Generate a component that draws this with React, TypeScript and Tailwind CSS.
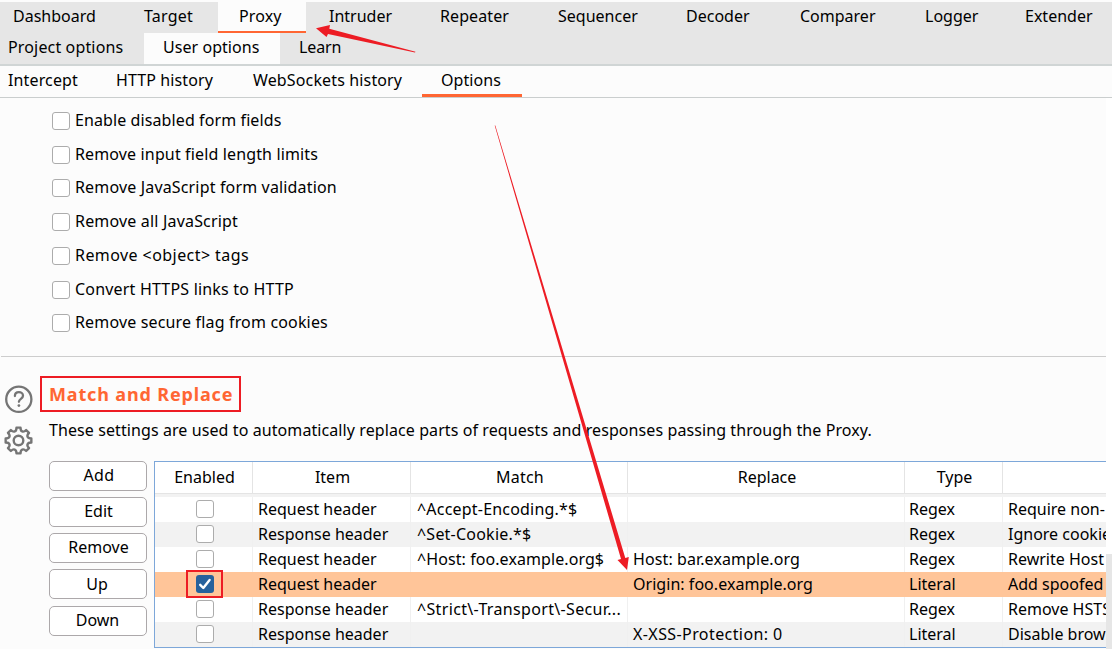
type Tab = { label: string; className: string; active?: boolean };

const topTabs: Tab[] = [
  { label: 'Dashboard', className: 'w-[118px] pl-[12px]' },
  { label: 'Target', className: 'w-[99px] pl-[25px] tracking-[0.2px]' },
  { label: 'Proxy', className: 'w-[88px] pl-[21px] tracking-[0.1px]', active: true },
  { label: 'Intruder', className: 'w-[111px] pl-[23px]' },
  { label: 'Repeater', className: 'w-[117px] pl-[23px] tracking-[0.1px]' },
  { label: 'Sequencer', className: 'w-[129px] pl-[24px]' },
  { label: 'Decoder', className: 'w-[113px] pl-[23px]' },
  { label: 'Comparer', className: 'w-[126px] pl-[24px]' },
  { label: 'Logger', className: 'w-[101px] pl-[23px]' },
  { label: 'Extender', className: 'w-[109px] pl-[22px]' },
];

const secondTabs: Tab[] = [
  { label: 'Project options', className: 'w-[144px] pl-[8px] tracking-[0.15px]' },
  { label: 'User options', className: 'w-[136px] pl-[19px] tracking-[0.05px]', active: true },
  { label: 'Learn', className: 'w-[80px] pl-[19px] tracking-[-0.1px]' },
];

const subTabs: Tab[] = [
  { label: 'Intercept', className: 'w-[92px] pl-[8px] tracking-[0.14px]' },
  { label: 'HTTP history', className: 'w-[140px] pl-[24px] tracking-[0.11px]' },
  { label: 'WebSockets history', className: 'w-[190px] pl-[21px] tracking-[0.14px]' },
  { label: 'Options', className: 'w-[100px] pl-[19px] tracking-[0.08px]', active: true },
];

const settings: Tab[] = [
  { label: 'Enable disabled form fields', className: 'tracking-[0.1px]' },
  { label: 'Remove input field length limits', className: 'tracking-[0.14px]' },
  { label: 'Remove JavaScript form validation', className: 'tracking-[0.16px]' },
  { label: 'Remove all JavaScript', className: 'tracking-[0.18px]' },
  { label: 'Remove <object> tags', className: 'tracking-[0.43px]' },
  { label: 'Convert HTTPS links to HTTP', className: 'tracking-[0.19px]' },
  { label: 'Remove secure flag from cookies', className: 'tracking-[0.16px]' },
];

const buttons: Tab[] = [
  { label: 'Add', className: 'pl-[2px] tracking-[0.4px]' },
  { label: 'Edit', className: 'pl-px' },
  { label: 'Remove', className: 'pl-px' },
  { label: 'Up', className: 'pr-[2px] pt-px' },
  { label: 'Down', className: 'mt-px pr-px' },
];

type Rule = {
  enabled?: boolean;
  item: string;
  match: string;
  matchClass?: string;
  replace: string;
  replaceClass?: string;
  type: string;
  comment: string;
  background: string;
};

const rules: Rule[] = [
  { item: 'Request header', match: '^Accept-Encoding.*$', matchClass: 'tracking-[0.2px]', replace: '', type: 'Regex', comment: 'Require non-', background: 'bg-white' },
  { item: 'Response header', match: '^Set-Cookie.*$', matchClass: 'tracking-[0.22px]', replace: '', type: 'Regex', comment: 'Ignore cookie', background: 'bg-[#f2f2f2]' },
  { item: 'Request header', match: '^Host: foo.example.org$', matchClass: 'tracking-[0.08px]', replace: 'Host: bar.example.org', replaceClass: 'tracking-[0.1px]', type: 'Regex', comment: 'Rewrite Host', background: 'bg-white' },
  { enabled: true, item: 'Request header', match: '', replace: 'Origin: foo.example.org', replaceClass: 'tracking-[0.04px]', type: 'Literal', comment: 'Add spoofed', background: 'bg-[#ffc599]' },
  { item: 'Response header', match: '^Strict\\-Transport\\-Secur...', matchClass: 'tracking-[0.34px]', replace: '', type: 'Regex', comment: 'Remove HSTS', background: 'bg-white' },
  { item: 'Response header', match: '', replace: 'X-XSS-Protection: 0', replaceClass: 'tracking-[0.41px]', type: 'Literal', comment: 'Disable brow', background: 'bg-[#f2f2f2]' },
];

function Checkbox({ checked }: { checked?: boolean }) {
  if (checked) {
    return (
      <span className="block size-[18px] shrink-0 rounded-[3px] bg-[#26619c]">
        <svg viewBox="0 0 18 18" className="size-[18px]" fill="none" stroke="white" strokeWidth="2.4" strokeLinecap="round" strokeLinejoin="round">
          <path d="M4.2 9.8 7.3 13 13.6 5" />
        </svg>
      </span>
    );
  }
  return <span className="block size-[18px] shrink-0 rounded-[3px] border border-[#acacac] bg-white" />;
}

function HelpIcon() {
  return (
    <svg viewBox="0 0 30 30" className="size-[30px]" fill="none" stroke="#757575" strokeWidth="2.3">
      <circle cx="14.8" cy="15.3" r="12.6" />
      <path d="M10.9 12c0-2.4 1.8-3.8 4-3.8s4.1 1.4 4.1 3.5c0 3.1-4.1 3.2-4.1 6.1" strokeLinecap="round" />
      <circle cx="14.9" cy="21.6" r="1.4" fill="#757575" stroke="none" />
    </svg>
  );
}

const polar = (radius: number, degrees: number) => {
  const a = (degrees * Math.PI) / 180;
  return `${(15.5 + radius * Math.cos(a)).toFixed(2)} ${(15.5 + radius * Math.sin(a)).toFixed(2)}`;
};

const gearPath =
  `M${polar(13, -9)}` +
  Array.from({ length: 8 }, (_, k) => {
    const a = k * 45;
    return `L${polar(13, a + 9)}C${polar(9, a + 13)} ${polar(9, a + 32)} ${polar(13, a + 36)}`;
  }).join('') +
  'Z';

function GearIcon() {
  return (
    <svg viewBox="0 0 31 31" className="size-[31px]" fill="none" stroke="#757575" strokeWidth="2.4" strokeLinejoin="round">
      <circle cx="15.5" cy="15.5" r="4.8" />
      <path d={gearPath} />
    </svg>
  );
}

const columns = 'grid grid-cols-[98px_158px_217px_277px_98px_103px]';

export default function App() {
  return (
    <div className="relative flex h-[649px] w-[1112px] flex-col overflow-hidden bg-[#fcfcfc] pt-[2px] font-['Noto_Sans',sans-serif] text-[16px] leading-6 whitespace-nowrap text-black">
      <header className="h-16 shrink-0 border-b-2 border-[#d0d5d5] bg-[#e6e6e6]">
        <nav className="flex h-[31px] pl-px">
          {topTabs.map((t) => (
            <div key={t.label} className={`shrink-0 pt-[2px] ${t.className} ${t.active ? 'border-b-2 border-[#ff6633] bg-[#fcfcfc]' : ''}`}>
              {t.label}
            </div>
          ))}
        </nav>
        <nav className="flex h-[31px]">
          {secondTabs.map((t) => (
            <div key={t.label} className={`shrink-0 pt-[2px] ${t.className} ${t.active ? 'bg-[#fcfcfc]' : ''}`}>
              {t.label}
            </div>
          ))}
        </nav>
      </header>
      <nav className="flex h-8 shrink-0 border-b border-[#cacece]">
        {subTabs.map((t) => (
          <div key={t.label} className={`h-[31px] shrink-0 pt-[2px] ${t.className} ${t.active ? 'border-b-3 border-[#ff6633]' : ''}`}>
            {t.label}
          </div>
        ))}
      </nav>

      <div className="flex min-h-0 flex-1">
        <main className="flex w-[1106px] flex-col">
          <section className="flex h-[258px] shrink-0 flex-col pt-[6px] pl-[52px]">
            {settings.map((s) => (
              <label key={s.label} className="flex h-[33.75px] shrink-0 items-center gap-[5px]">
                <Checkbox />
                <span className={`-mt-[2px] ${s.className}`}>{s.label}</span>
              </label>
            ))}
          </section>
          <div className="ml-px h-px shrink-0 bg-[#cdcdcd]" />
          <section className="flex pt-[19px]">
            <div className="flex w-[40px] shrink-0 flex-col items-start gap-[11px] pt-[8px] pl-[3px]">
              <span className="ml-px"><HelpIcon /></span>
              <GearIcon />
            </div>
            <div className="flex min-w-0 flex-1 flex-col">
              <h2 className="flex h-[36px] w-[201px] items-center border-2 border-[#ed1c24] pl-[7px] text-[18px] font-bold tracking-[0.85px] text-[#ff6633]">
                Match and Replace
              </h2>
              <p className="mt-[6px] pl-[9px] tracking-[0.09px]">
                These settings are used to automatically replace parts of requests and responses passing through the Proxy.
              </p>
              <div className="mt-[19px] flex gap-[7px] pl-[9px]">
                <div className="flex w-[98px] shrink-0 flex-col gap-[6px]">
                  {buttons.map((b) => (
                    <button key={b.label} className={`flex h-[30px] items-center justify-center rounded-[5px] border border-[#aca8aa] bg-white pb-[2px] ${b.className}`}>
                      {b.label}
                    </button>
                  ))}
                </div>
                <div className="h-[187px] w-[952px] overflow-hidden border border-r-0 border-[#7da7d9] bg-[#f2f2f2]">
                  <div className={`${columns} h-[32px] border-b border-[#e4e4e4] bg-white text-center *:border-[#e4e4e4] *:pt-[3px] *:pl-[2px] *:not-last:border-r`}>
                    <div>Enabled</div>
                    <div>Item</div>
                    <div className="tracking-[0.2px]">Match</div>
                    <div>Replace</div>
                    <div>Type</div>
                    <div />
                  </div>
                  <div className="mt-[3px]">
                    {rules.map((r, i) => (
                      <div key={i} className={`${columns} h-[25px] ${r.background} ${r.enabled ? '' : '*:border-[#f0f0f0] *:not-last:border-r'}`}>
                        <div className="flex items-center justify-center pb-px pl-[2px]">
                          {r.enabled ? (
                            <span className="relative">
                              <span className="absolute -top-[5px] -left-[10px] h-[28px] w-[37px] border-2 border-[#ed1c24]" />
                              <Checkbox checked />
                            </span>
                          ) : (
                            <Checkbox />
                          )}
                        </div>
                        <div className="pl-[5px]">{r.item}</div>
                        <div className={`pl-[6px] ${r.matchClass ?? ''}`}>{r.match}</div>
                        <div className={`pl-[5px] ${r.replaceClass ?? ''}`}>{r.replace}</div>
                        <div className="pl-[4px]">{r.type}</div>
                        <div className="overflow-hidden pl-[5px]">{r.comment}</div>
                      </div>
                    ))}
                  </div>
                </div>
              </div>
            </div>
          </section>
        </main>
        <aside className="flex w-[6px] flex-col justify-end bg-white">
          <div className="h-[95px] bg-[#e6e6e6]" />
        </aside>
      </div>

      <svg viewBox="0 0 1112 649" className="pointer-events-none absolute inset-0 h-full w-full" fill="#ed1c24">
        <path d="M316 28.3 330 25 329.3 28.8 415.5 51.7 415 52.4 328 34 326.5 37Z" />
        <path d="M494.7 125.5 495.3 125.5 625.3 558 628.8 557 627 570 617.5 560 621 559Z" />
      </svg>
    </div>
  );
}
